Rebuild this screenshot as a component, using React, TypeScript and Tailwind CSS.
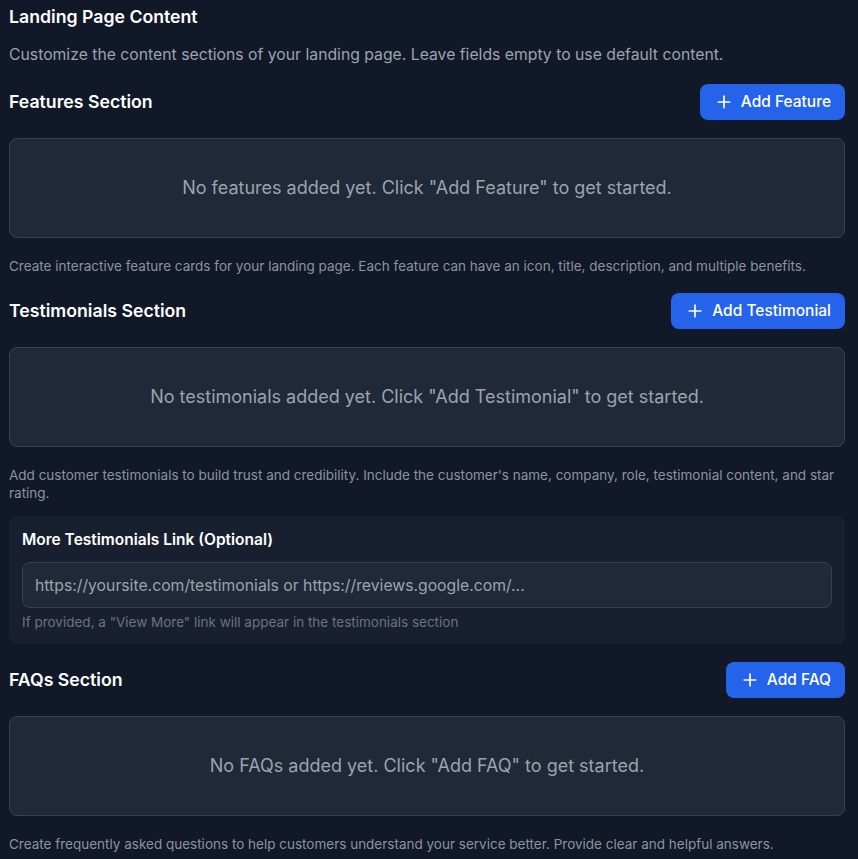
import { Plus } from 'lucide-react';

type SectionProps = {
  title: string;
  buttonLabel: string;
  emptyText: string;
  description: string;
};

function AddButton({ label }: { label: string }) {
  return (
    <button className="flex items-center gap-[7px] h-9 pl-3.5 pr-3.5 rounded-lg bg-[#2563eb] text-white text-[15.5px] font-medium hover:bg-blue-700">
      <Plus className="w-5 h-5" strokeWidth={2} />
      {label}
    </button>
  );
}

function Section({ title, buttonLabel, emptyText, description }: SectionProps) {
  return (
    <div className="flex flex-col">
      <div className="flex items-center justify-between">
        <h3 className="text-[17.7px] font-semibold text-white">{title}</h3>
        <AddButton label={buttonLabel} />
      </div>
      <div className="mt-[18px] h-[100px] flex items-center justify-center rounded-lg border border-[#374151] bg-[#1f2937]">
        <p className="text-lg text-[#9ca3af]">{emptyText}</p>
      </div>
      <p className="mt-[19px] text-[13.5px] leading-[18px] text-[#8b93a1]">{description}</p>
    </div>
  );
}

export default function App() {
  return (
    <div
      className="min-h-screen bg-[#111827] pl-[9px] pr-[13px] pt-[3px]"
      style={{ fontFamily: 'Inter, "Noto Sans", sans-serif' }}
    >
      <h2 className="text-[17.7px] leading-7 font-semibold text-white">Landing Page Content</h2>
      <p className="mt-3 text-[15.75px] leading-6 text-[#9ca3af]">
        Customize the content sections of your landing page. Leave fields empty to use default content.
      </p>

      <div className="mt-[17px]">
        <Section
          title="Features Section"
          buttonLabel="Add Feature"
          emptyText={'No features added yet. Click "Add Feature" to get started.'}
          description="Create interactive feature cards for your landing page. Each feature can have an icon, title, description, and multiple benefits."
        />
      </div>

      <div className="mt-[18px]">
        <Section
          title="Testimonials Section"
          buttonLabel="Add Testimonial"
          emptyText={'No testimonials added yet. Click "Add Testimonial" to get started.'}
          description="Add customer testimonials to build trust and credibility. Include the customer's name, company, role, testimonial content, and star rating."
        />
        <div className="mt-[14px] rounded-lg bg-[#182030] px-[13px] pt-[14px] pb-[13px]">
          <label className="block text-[15.5px] leading-5 font-semibold text-white">
            More Testimonials Link (Optional)
          </label>
          <input
            type="text"
            placeholder="https://yoursite.com/testimonials or https://reviews.google.com/..."
            className="mt-3 w-full h-[46px] px-3 rounded-lg border border-[#374151] bg-[#1f2937] text-[15.75px] text-white placeholder:text-[#9ca3af] outline-none"
          />
          <p className="mt-[5px] text-[13.5px] leading-[18px] text-[#6b7280]">
            If provided, a "View More" link will appear in the testimonials section
          </p>
        </div>
      </div>

      <div className="mt-[18px] pb-4">
        <Section
          title="FAQs Section"
          buttonLabel="Add FAQ"
          emptyText={'No FAQs added yet. Click "Add FAQ" to get started.'}
          description="Create frequently asked questions to help customers understand your service better. Provide clear and helpful answers."
        />
      </div>
    </div>
  );
}
